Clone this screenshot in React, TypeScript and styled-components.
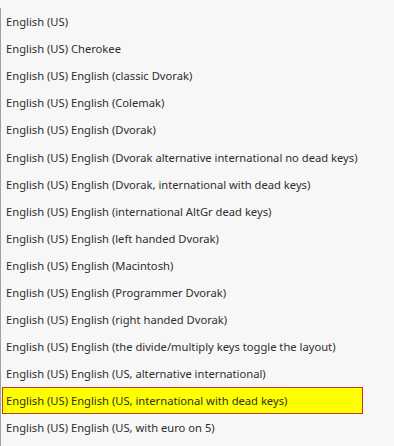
import React from 'react';
import styled, { createGlobalStyle } from 'styled-components';

const GlobalStyle = createGlobalStyle`
  html, body {
    margin: 0;
    padding: 0;
    background: #f7f7f7;
  }
`;

const layouts = [
  'English (US)',
  'English (US) Cherokee',
  'English (US) English (classic Dvorak)',
  'English (US) English (Colemak)',
  'English (US) English (Dvorak)',
  'English (US) English (Dvorak alternative international no dead keys)',
  'English (US) English (Dvorak, international with dead keys)',
  'English (US) English (international AltGr dead keys)',
  'English (US) English (left handed Dvorak)',
  'English (US) English (Macintosh)',
  'English (US) English (Programmer Dvorak)',
  'English (US) English (right handed Dvorak)',
  'English (US) English (the divide/multiply keys toggle the layout)',
  'English (US) English (US, alternative international)',
  'English (US) English (US, international with dead keys)',
  'English (US) English (US, with euro on 5)',
];

const Page = styled.div`
  width: 394px;
  height: 446px;
  overflow: hidden;
  padding-top: 8px;
  box-sizing: border-box;
`;

const List = styled.ul`
  list-style: none;
  margin: 0;
  padding: 0;
  border-left: 1px solid #a0a0a0;
  height: 100%;
  font-family: 'Noto Sans', 'Open Sans', sans-serif;
  font-size: 11.2px;
  color: #2e2e2e;
`;

const Item = styled.li<{ selected?: boolean }>`
  display: flex;
  align-items: center;
  height: 27.1px;
  box-sizing: border-box;
  width: 361px;
  margin-left: 1px;
  padding-left: 3px;
  border: 1px solid ${(p) => (p.selected ? '#c0392b' : 'transparent')};
  background: ${(p) => (p.selected ? '#ffff00' : 'transparent')};
  white-space: nowrap;
`;

export default function App() {
  const selected = 'English (US) English (US, international with dead keys)';
  return (
    <>
      <GlobalStyle />
      <Page>
        <List>
          {layouts.map((name) => (
            <Item key={name} selected={name === selected}>
              {name}
            </Item>
          ))}
        </List>
      </Page>
    </>
  );
}
